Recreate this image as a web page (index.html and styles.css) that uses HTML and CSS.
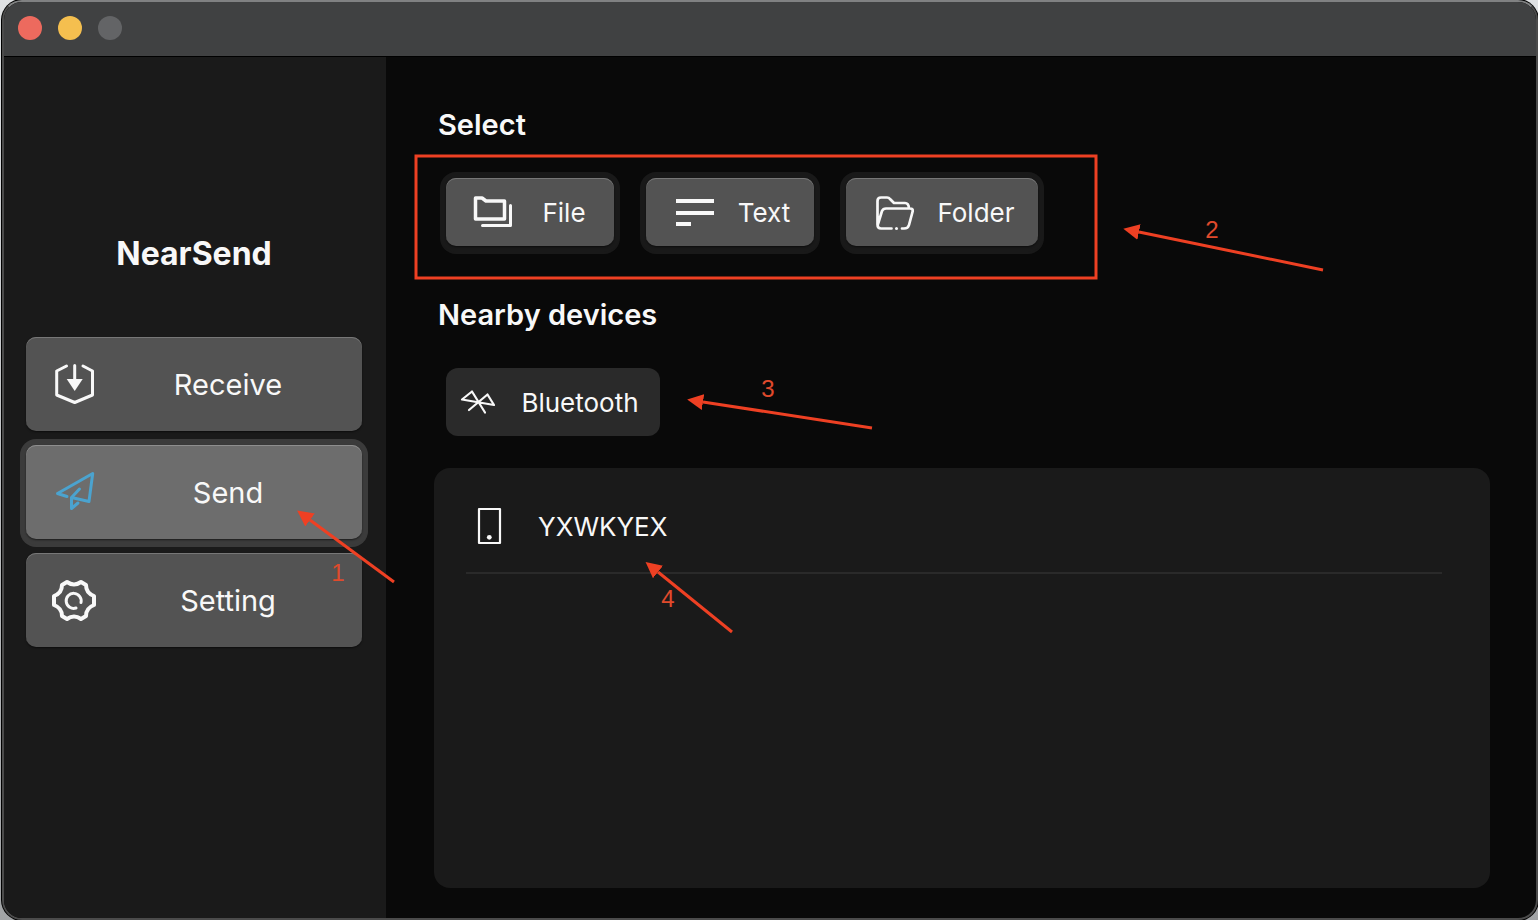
FILE: index.html
```html
<!DOCTYPE html>
<html lang="en">
<head>
<meta charset="utf-8">
<meta name="viewport" content="width=device-width, initial-scale=1">
<title>NearSend</title>
<link rel="stylesheet" href="styles.css">
</head>
<body>
<div class="window">
  <header class="titlebar">
    <button class="light light-close" type="button" aria-label="Close"></button>
    <button class="light light-minimize" type="button" aria-label="Minimize"></button>
    <button class="light" type="button" aria-label="Zoom" disabled></button>
  </header>
  <div class="body">
    <aside class="sidebar">
      <h1 class="brand">NearSend</h1>
      <nav class="nav">
        <button class="button nav-button" type="button">
          <svg class="nav-icon" viewBox="0 0 48 48" aria-hidden="true">
            <path class="line" d="M16.500 6L6.700 11V35L24.700 42.500L42.500 35V11L33 6M24.700 5.500V20"/>
            <path class="solid" d="M16.700 19H32.700L24.700 31Z"/>
          </svg>
          <span class="label">Receive</span>
        </button>
        <button class="button nav-button active" type="button" aria-current="page">
          <svg class="nav-icon" viewBox="0 0 48 48" aria-hidden="true">
            <path class="line" d="M17 28.500L7.500 25.500L42.700 5.500L39 33.500L21.500 29.500V40.500L28 35M21.500 29.500L29.500 21"/>
          </svg>
          <span class="label">Send</span>
        </button>
        <button class="button nav-button" type="button">
          <svg class="nav-icon" viewBox="0 0 48 48" aria-hidden="true">
            <path class="line bold" d="M17 6Q24 11 31 6L36 9Q36 17 44 20V29Q36 32 36 40L31 43Q24 38 17 43L12 40Q12 32 4 29V20Q12 17 12 9Z"/>
            <path class="line" d="M26 32A7.500 7.500 0 1 1 31 26.500"/>
          </svg>
          <span class="label">Setting</span>
        </button>
      </nav>
    </aside>
    <main class="content">
      <h2 class="heading">Select</h2>
      <div class="choices">
        <button class="button choice" type="button">
          <svg class="icon" viewBox="0 0 44 44" aria-hidden="true">
            <path class="line heavy" d="M5.500 8H12L16 11H34.500V29H5.500Z"/>
            <path class="line" d="M40.500 15.500V35.500H12.500"/>
          </svg>
          <span class="label">File</span>
        </button>
        <button class="button choice" type="button">
          <svg class="icon" viewBox="0 0 44 44" aria-hidden="true">
            <path class="solid" d="M6 9H44V13H6ZM6 21H44V25H6ZM6 32H21V36H6Z"/>
          </svg>
          <span class="label">Text</span>
        </button>
        <button class="button choice choice-wide" type="button">
          <svg class="icon" viewBox="0 0 44 44" aria-hidden="true">
            <path class="line thin" d="M21.500 38.500H11Q7.500 38.500 7.500 34.500V11Q7.500 7.500 11 7.500H17Q19 7.500 20 9L24 13H35Q38.500 13 39 18M8 34L12 21Q13 18.500 16 18.500H40Q43.500 18.500 42.500 22L39 35Q38 38.500 34 38.500H32"/>
            <circle class="solid" cx="26.500" cy="38.500" r="1.500"/>
          </svg>
          <span class="label">Folder</span>
        </button>
      </div>
      <h2 class="heading heading-devices">Nearby devices</h2>
      <button class="bluetooth" type="button">
        <svg class="icon" viewBox="0 0 44 44" aria-hidden="true">
          <path class="line hair" d="M29 32.500L16 11.500L6 19.500L38 25L31.500 14.500L13 30"/>
        </svg>
        <span class="label">Bluetooth</span>
      </button>
      <ul class="devices">
        <li class="device">
          <svg class="nav-icon" viewBox="0 0 48 48" aria-hidden="true">
            <rect class="line hair" x="13" y="7" width="21" height="34"/>
            <circle class="solid" cx="23.300" cy="35.300" r="2.400"/>
          </svg>
          <span class="device-name">YXWKYEX</span>
        </li>
      </ul>
    </main>
  </div>
</div>
<svg class="notes" width="1538" height="920" viewBox="0 0 1538 920">
  <defs>
    <marker id="head" markerUnits="userSpaceOnUse" markerWidth="16" markerHeight="16" refX="0" refY="8" orient="auto-start-reverse" viewBox="0 0 16 16">
      <path d="M0 0L16 8L0 16Z"/>
    </marker>
  </defs>
  <rect x="416" y="156" width="680" height="122"/>
  <g marker-end="url(#head)">
    <path d="M394 582L310 520"/>
    <path d="M1323 270L1139 232"/>
    <path d="M872 428L703 402"/>
    <path d="M732 632L658 572"/>
  </g>
  <text x="338" y="581">1</text>
  <text x="1212" y="238">2</text>
  <text x="768" y="397">3</text>
  <text x="668" y="607">4</text>
</svg>
</body>
</html>
```
FILE: styles.css
```css
* {
  box-sizing: border-box;
}

body {
  margin: 0;
  background: linear-gradient(#dfe1e3, #a2a4a6);
  color: #f8f8f8;
  font-family: Inter, "Liberation Sans", sans-serif;
}

button {
  border: 0;
  padding: 0;
  color: inherit;
  font: inherit;
}

.window {
  display: flex;
  flex-direction: column;
  min-height: 100vh;
  margin-left: 2px;
  overflow: hidden;
  border: 2px solid #4b4b4b;
  border-top-color: #808182;
  border-radius: 20px;
  background: #090909;
  box-shadow: 0 0 0 1px #000;
}

.titlebar {
  display: flex;
  align-items: center;
  gap: 16px;
  height: 55px;
  padding: 0 14px 2px;
  border-bottom: 1px solid #000;
  background: #404142;
}

.light {
  width: 24px;
  height: 24px;
  border-radius: 50%;
  background: #636466;
}

.light-close {
  background: #ed6a5e;
}

.light-minimize {
  background: #f5bf4f;
}

.body {
  display: flex;
  flex: 1;
}

.sidebar {
  flex: none;
  width: 382px;
  padding: 177px 24px 0 22px;
  background: #1a1a1a;
}

.brand {
  margin: 0 0 63px;
  font-size: 32px;
  font-weight: 700;
  line-height: 40px;
  text-align: center;
}

.nav {
  display: flex;
  flex-direction: column;
  gap: 14px;
}

.button {
  display: flex;
  align-items: center;
  border-radius: 10px;
  background: #535353;
}

.nav-button {
  gap: 20px;
  height: 94px;
  padding: 0 24px;
  font-size: 29px;
  box-shadow: inset 0 1px #777, 0 1px 2px #0008;
}

.active {
  background: #6d6d6d;
  box-shadow: inset 0 1px #8e8e8e, 0 1px 2px #0008, 0 0 0 6px #3b3b3b, 0 2px 0 6px #3b3b3b;
}

.active .line {
  stroke: #4ba3cf;
}

.label {
  flex: 1;
  text-align: center;
}

.nav-icon,
.icon {
  flex: none;
  width: 48px;
  height: 48px;
}

.icon {
  width: 44px;
  height: 44px;
}

.line {
  fill: none;
  stroke: #f8f8f8;
  stroke-width: 3;
  stroke-linecap: round;
  stroke-linejoin: round;
}

.bold {
  stroke-width: 4;
}

.heavy {
  stroke-width: 3.5;
}

.thin {
  stroke-width: 2.7;
}

.hair {
  stroke-width: 2.2;
}

.solid {
  fill: #f8f8f8;
}

.content {
  display: flex;
  flex: 1;
  flex-direction: column;
  padding: 48px 46px 30px 48px;
}

.heading {
  margin: 0 4px 33px;
  font-size: 29px;
  font-weight: 600;
  line-height: 40px;
}

.heading-devices {
  margin-top: 49px;
}

.choices {
  display: flex;
  gap: 32px;
  padding-left: 12px;
}

.choice {
  width: 168px;
  height: 68px;
  padding-left: 24px;
  font-size: 26px;
  box-shadow: inset 0 1px #777, 0 1px 2px #0008, 0 0 0 6px #191919, 0 2px 0 6px #191919;
}

.choice-wide {
  width: 192px;
}

.bluetooth {
  display: flex;
  align-items: center;
  width: 214px;
  height: 68px;
  margin: 0 12px 32px;
  padding-left: 10px;
  border-radius: 12px;
  background: #2a2a2a;
  font-size: 26px;
}

.devices {
  flex: 1;
  margin: 0;
  padding: 0 48px 0 32px;
  border-radius: 16px;
  background: #1a1a1a;
  list-style: none;
}

.device {
  display: flex;
  align-items: center;
  gap: 24px;
  height: 106px;
  padding-top: 12px;
  border-bottom: 2px solid #2a2a2a;
  font-size: 26px;
}

.notes {
  position: absolute;
  top: 0;
  left: 0;
  pointer-events: none;
  fill: none;
  stroke: #ee4023;
  stroke-width: 3;
}

.notes marker path {
  fill: #ee4023;
  stroke: none;
}

.notes text {
  fill: #e04a2c;
  stroke: none;
  font-family: "Liberation Sans", sans-serif;
  font-size: 24px;
  text-anchor: middle;
}
```
